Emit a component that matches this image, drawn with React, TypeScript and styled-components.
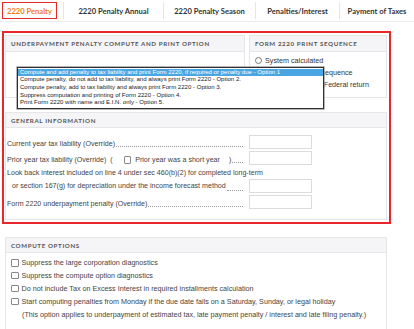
import React from "react";
import styled, { createGlobalStyle } from "styled-components";

const Global = createGlobalStyle`
  html, body { margin: 0; padding: 0; background: #fff; }
  body { font-family: "Liberation Sans", Arial, sans-serif; color: #444; width: 414px; overflow: hidden; }
  * { box-sizing: border-box; }
`;

const Page = styled.div`
  display: flex;
  flex-direction: column;
  width: 414px;
`;

const TabBar = styled.div`
  display: flex;
  align-items: center;
  height: 22px;
  border-bottom: 1px solid #ececec;
`;

const Tab = styled.div<{ $w: number; $active?: boolean }>`
  width: ${(p) => p.$w}px;
  height: 17px;
  display: flex;
  align-items: center;
  justify-content: center;
  font-family: Lato, "Open Sans", sans-serif;
  font-weight: 700;
  font-size: 7.6px;
  white-space: nowrap;
  color: ${(p) => (p.$active ? "#f47b20" : "#333")};
  border: ${(p) => (p.$active ? "1.5px solid #e52a2a" : "none")};
  border-left: ${(p) => (p.$active ? "1.5px solid #e52a2a" : "1px solid #e6e6e6")};
  margin: ${(p) => (p.$active ? "0 6px 0 2px" : "0")};
`;

const RedBox = styled.div`
  margin: 9px 23px 0 2px;
  border: 2px solid #e8262b;
  padding: 2px 2px 2px 1px;
  display: flex;
  flex-direction: column;
  gap: 14px;
`;

const TopRow = styled.div`
  display: grid;
  grid-template-columns: 240px 138px;
  gap: 4px;
`;

const Panel = styled.div<{ $h?: number }>`
  position: relative;
  border: 1px solid #e6e6e8;
  background: #fff;
  ${(p) => (p.$h ? `height: ${p.$h}px;` : "")}
`;

const PanelHeader = styled.div<{ $h?: number }>`
  height: ${(p) => p.$h ?? 15}px;
  display: flex;
  align-items: center;
  padding: 0 5px;
  background: #f5f5f7;
  border-bottom: 1px solid #e6e6e8;
  font-family: Lato, "Open Sans", sans-serif;
  font-weight: 700;
  font-size: 6.2px;
  letter-spacing: 0.62px;
  color: #555;
  text-transform: uppercase;
  white-space: nowrap;
`;

const RadioList = styled.div`
  display: flex;
  flex-direction: column;
  padding: 3px 5px 0;
`;

const RadioRow = styled.label`
  display: flex;
  align-items: center;
  gap: 3px;
  height: 11.8px;
  font-size: 7.2px;
  color: #333;
  white-space: nowrap;
`;

const RadioDot = styled.span`
  width: 7px;
  height: 7px;
  border-radius: 50%;
  border: 1px solid #777;
  background: #fff;
  flex: none;
`;

const DropList = styled.div`
  position: absolute;
  left: 11px;
  top: 31px;
  width: 307px;
  z-index: 5;
  background: #fff;
  border: 1.5px solid #2f2f2f;
  box-shadow: 0 0 0 0.7px #999;
  padding: 0.5px 0 1px;
  display: flex;
  flex-direction: column;
`;

const DropItem = styled.div<{ $sel?: boolean }>`
  height: 7.7px;
  line-height: 7.7px;
  padding: 0 2px;
  font-size: 6.05px;
  white-space: nowrap;
  overflow: hidden;
  color: ${(p) => (p.$sel ? "#fff" : "#222")};
  background: ${(p) => (p.$sel ? "#4aa6e2" : "transparent")};
`;

const GIBody = styled.div`
  display: flex;
  flex-direction: column;
  gap: 2px;
  padding: 7px 0 10px 1px;
`;

const FieldRow = styled.div`
  display: flex;
  align-items: flex-end;
  gap: 6px;
`;

const LabelCol = styled.div`
  width: 236px;
  display: flex;
  flex-direction: column;
`;

const LabelLine = styled.div<{ $lh: number; $indent?: number }>`
  display: flex;
  align-items: flex-end;
  height: ${(p) => p.$lh}px;
  line-height: ${(p) => p.$lh}px;
  padding-left: ${(p) => p.$indent ?? 0}px;
  font-size: 7.1px;
  color: #444;
  white-space: nowrap;
`;

const Leader = styled.span`
  flex: 1;
  min-width: 4px;
  margin: 0 0 2.5px 1px;
  border-bottom: 1px dotted #9a9a9a;
`;

const InlineCheck = styled.span`
  display: inline-flex;
  align-items: center;
  gap: 4px;
  margin: 0 9px 0 11px;
  align-self: center;
`;

const Box = styled.span`
  width: 7.5px;
  height: 7.5px;
  border: 1px solid #888;
  border-radius: 1px;
  background: #fff;
  flex: none;
`;

const Input = styled.div`
  width: 63px;
  height: 14px;
  border: 1px solid #dcdcdc;
  background: #fff;
  flex: none;
`;

const ComputePanel = styled(Panel)`
  margin: 13px 27px 0 5px;
  height: 100px;
`;

const OptionList = styled.div`
  display: flex;
  flex-direction: column;
  padding: 3.5px 5px 0;
`;

const OptionRow = styled.label<{ $plain?: boolean }>`
  display: flex;
  align-items: center;
  gap: 3px;
  height: 12.8px;
  font-size: 7.2px;
  color: #444;
  white-space: nowrap;
  padding-left: ${(p) => (p.$plain ? "11px" : "0")};
`;

const tabs = [
  { label: "2220 Penalty", w: 55, active: true },
  { label: "2220 Penalty Annual", w: 100 },
  { label: "2220 Penalty Season", w: 92 },
  { label: "Penalties/Interest", w: 84 },
  { label: "Payment of Taxes", w: 75 },
];

const dropItems = [
  "Compute and add penalty to tax liability and print Form 2220, if required or penalty due - Option 1",
  "Compute penalty, do not add to tax liability, and always print Form 2220 - Option 2.",
  "Compute penalty, add to tax liability and always print Form 2220 - Option 3.",
  "Suppress computation and printing of Form 2220 - Option 4.",
  "Print Form 2220 with name and E.I.N. only - Option 5.",
];

const options = [
  "Suppress the large corporation diagnostics",
  "Suppress the compute option diagnostics",
  "Do not include Tax on Excess Interest in required installments calculation",
  "Start computing penalties from Monday if the due date falls on a Saturday, Sunday, or legal holiday",
];

export default function App() {
  return (
    <Page>
      <Global />
      <TabBar>
        {tabs.map((t) => (
          <Tab key={t.label} $w={t.w} $active={t.active}>
            {t.label}
          </Tab>
        ))}
      </TabBar>

      <RedBox>
        <TopRow>
          <Panel $h={63}>
            <PanelHeader $h={16}>Underpayment Penalty Compute and Print Option</PanelHeader>
            <DropList>
              {dropItems.map((d, i) => (
                <DropItem key={d} $sel={i === 0}>
                  {d}
                </DropItem>
              ))}
            </DropList>
          </Panel>
          <Panel $h={63}>
            <PanelHeader $h={16}>Form 2220 Print Sequence</PanelHeader>
            <RadioList>
              <RadioRow>
                <RadioDot />
                System calculated
              </RadioRow>
              <RadioRow>
                <RadioDot />
                Form attachment sequence
              </RadioRow>
              <RadioRow>
                <RadioDot />
                Print at the end of Federal return
              </RadioRow>
            </RadioList>
          </Panel>
        </TopRow>

        <Panel>
          <PanelHeader>General Information</PanelHeader>
          <GIBody>
            <FieldRow>
              <LabelCol>
                <LabelLine $lh={10}>
                  Current year tax liability (Override)
                  <Leader />
                </LabelLine>
              </LabelCol>
              <Input />
            </FieldRow>
            <FieldRow>
              <LabelCol>
                <LabelLine $lh={10}>
                  Prior year tax liability (Override)&nbsp;&nbsp;(
                  <InlineCheck>
                    <Box />
                    Prior year was a short year
                  </InlineCheck>
                  )
                  <Leader />
                </LabelLine>
              </LabelCol>
              <Input />
            </FieldRow>
            <FieldRow>
              <LabelCol>
                <LabelLine $lh={13}>
                  Look back interest included on line 4 under sec 460(b)(2) for completed long-term
                </LabelLine>
                <LabelLine $lh={13} $indent={5}>
                  or section 167(g) for depreciation under the income forecast method
                  <Leader />
                </LabelLine>
              </LabelCol>
              <Input />
            </FieldRow>
            <FieldRow>
              <LabelCol>
                <LabelLine $lh={10}>
                  Form 2220 underpayment penalty (Override)
                  <Leader />
                </LabelLine>
              </LabelCol>
              <Input />
            </FieldRow>
          </GIBody>
        </Panel>
      </RedBox>

      <ComputePanel>
        <PanelHeader>Compute Options</PanelHeader>
        <OptionList>
          {options.map((o) => (
            <OptionRow key={o}>
              <Box />
              {o}
            </OptionRow>
          ))}
          <OptionRow $plain>
            (This option applies to underpayment of estimated tax, late payment penalty / interest and late filing penalty.)
          </OptionRow>
        </OptionList>
      </ComputePanel>
    </Page>
  );
}
